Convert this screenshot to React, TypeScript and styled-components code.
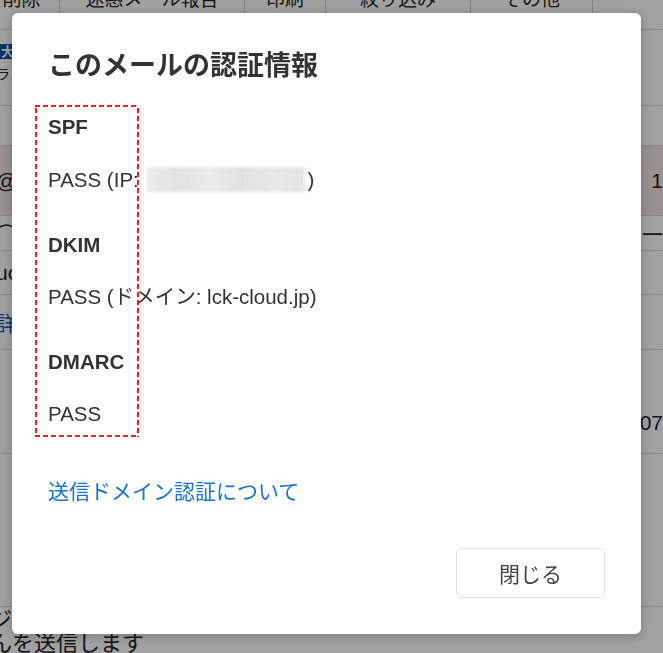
import React from 'react'
import styled, { createGlobalStyle } from 'styled-components'

const GlobalStyle = createGlobalStyle`
  html, body {
    margin: 0;
    padding: 0;
    background: #ffffff;
    font-family: "Liberation Sans", "Noto Sans CJK JP", sans-serif;
    color: #333333;
    overflow: hidden;
  }
`

const JP = '"Liberation Sans", "Noto Sans CJK JP", sans-serif'

// ---- page behind the dialog ----
const Page = styled.div`
  width: 663px;
  height: 653px;
  background: #ffffff;
  overflow: hidden;
`

const Toolbar = styled.div`
  display: flex;
  height: 29px;
  border-bottom: 1px solid #d6d6d6;
  margin-left: -16px;
`

const Tab = styled.div<{ w: number }>`
  width: ${(p) => p.w}px;
  flex: none;
  border-right: 1px solid #d0d0d0;
  display: flex;
  justify-content: center;
  font-size: 19px;
  color: #222;
  line-height: 20px;
  box-sizing: border-box;
  overflow: hidden;
`

const TabText = styled.span`
  margin-top: -10px;
`

const Row = styled.div<{ h: number; tint?: string; bottom?: boolean }>`
  height: ${(p) => p.h}px;
  background: ${(p) => p.tint || '#ffffff'};
  border-bottom: 1px solid #d6d6d6;
  display: flex;
  align-items: ${(p) => (p.bottom ? 'flex-end' : 'center')};
  justify-content: space-between;
  padding-bottom: ${(p) => (p.bottom ? 18 : 0)}px;
  font-size: 20px;
  color: #222;
  box-sizing: border-box;
`

const Cell = styled.span<{ blue?: boolean; small?: boolean }>`
  color: ${(p) => (p.blue ? '#0d52a8' : '#222')};
  font-size: ${(p) => (p.small ? 14 : 21)}px;
  margin-left: -4px;
`

const Stack = styled.div`
  display: flex;
  flex-direction: column;
  gap: 4px;
  margin-top: -8px;
`

const Badge = styled.span`
  align-self: flex-start;
  background: #0d52a8;
  color: #ffffff;
  font-size: 13px;
  font-weight: 700;
  line-height: 15px;
  padding: 0 1px;
`

const Plain = styled.div<{ gap?: number }>`
  font-size: 22px;
  color: #222;
  line-height: 26px;
  margin-top: ${(p) => p.gap || 0}px;
  margin-left: -10px;
`

// ---- overlay + dialog ----
const Overlay = styled.div`
  position: fixed;
  inset: 0;
  background: rgba(0, 0, 0, 0.37);
`

const Dialog = styled.div`
  position: fixed;
  left: 12px;
  top: 13px;
  width: 629px;
  height: 621px;
  box-sizing: border-box;
  background: #ffffff;
  border-radius: 6px;
  box-shadow: 0 2px 12px rgba(0, 0, 0, 0.25);
  padding: 37px 36px 36px 36px;
  display: flex;
  flex-direction: column;
`

const Title = styled.h2`
  margin: 0;
  font-family: ${JP};
  font-size: 27px;
  font-weight: 700;
  line-height: 32px;
  color: #333333;
`

const InfoList = styled.div`
  position: relative;
  margin-top: 23px;
  padding: 10px 0 11px 0;
`

// red dashed annotation drawn over the first column
const Highlight = styled.div`
  position: absolute;
  left: -13px;
  top: 0;
  width: 104px;
  bottom: 0;
  pointer-events: none;
  background-image:
    linear-gradient(90deg, #ff1a1a 65%, transparent 65%),
    linear-gradient(90deg, #ff1a1a 65%, transparent 65%),
    linear-gradient(0deg, #ff1a1a 65%, transparent 65%),
    linear-gradient(0deg, #ff1a1a 65%, transparent 65%);
  background-size: 8px 2px, 8px 2px, 2px 8px, 2px 8px;
  background-position: left top, left bottom, left top, right top;
  background-repeat: repeat-x, repeat-x, repeat-y, repeat-y;
`

const Label = styled.div<{ first?: boolean }>`
  font-size: 20.5px;
  font-weight: 700;
  line-height: 24px;
  color: #333333;
  margin-top: ${(p) => (p.first ? 0 : 41)}px;
`

const Value = styled.div`
  font-family: ${JP};
  font-size: 20.5px;
  line-height: 24px;
  color: #333333;
  margin-top: 28px;
  display: flex;
  align-items: center;
  white-space: pre;
`

const Blurred = styled.span`
  display: inline-block;
  width: 158px;
  height: 25px;
  margin: 0 2px 0 3px;
  background: linear-gradient(90deg, #ececec, #e2e2e2 20%, #ebebeb 40%, #e1e1e1 60%, #e9e9e9 80%, #e4e4e4);
  filter: blur(1.5px);
`

const Link = styled.a`
  font-family: ${JP};
  font-size: 21px;
  line-height: 24px;
  color: #1a73d1;
  text-decoration: none;
  margin-top: 43px;
  align-self: flex-start;
`

const Footer = styled.div`
  margin-top: auto;
  display: flex;
  justify-content: flex-end;
`

const Button = styled.button`
  width: 149px;
  height: 50px;
  background: #ffffff;
  border: 1px solid #e0e0e0;
  border-radius: 5px;
  font-family: ${JP};
  font-size: 21px;
  color: #444444;
  cursor: pointer;
`

const tabs = [
  { w: 76, t: '削除' },
  { w: 185, t: '迷惑メール報告' },
  { w: 81, t: '印刷' },
  { w: 145, t: '絞り込み' },
  { w: 122, t: 'その他' },
  { w: 200, t: '' },
]

export default function App() {
  return (
    <>
      <GlobalStyle />
      <Page>
        <Toolbar>
          {tabs.map((tab, i) => (
            <Tab key={i} w={tab.w}>
              <TabText>{tab.t}</TabText>
            </Tab>
          ))}
        </Toolbar>
        <Row h={76}>
          <Stack>
            <Badge>大</Badge>
            <Cell small>ランク</Cell>
          </Stack>
        </Row>
        <Row h={40} />
        <Row h={70} tint="#f3e4e4">
          <Cell>@</Cell>
          <Cell>1</Cell>
        </Row>
        <Row h={35}>
          <Cell>⌒</Cell>
          <Cell>一</Cell>
        </Row>
        <Row h={44}>
          <Cell>uc</Cell>
        </Row>
        <Row h={55}>
          <Cell blue>詳</Cell>
        </Row>
        <Row h={104} bottom>
          <span />
          <Cell>07</Cell>
        </Row>
        <Row h={153} />
        <Plain>ジ</Plain>
        <Plain gap={-2}>んを送信します</Plain>
      </Page>
      <Overlay />
      <Dialog>
        <Title>このメールの認証情報</Title>
        <InfoList>
          <Highlight />
          <Label first>SPF</Label>
          <Value>
            PASS (IP: <Blurred />)
          </Value>
          <Label>DKIM</Label>
          <Value>PASS (ドメイン: lck-cloud.jp)</Value>
          <Label>DMARC</Label>
          <Value>PASS</Value>
        </InfoList>
        <Link href="#">送信ドメイン認証について</Link>
        <Footer>
          <Button>閉じる</Button>
        </Footer>
      </Dialog>
    </>
  )
}
